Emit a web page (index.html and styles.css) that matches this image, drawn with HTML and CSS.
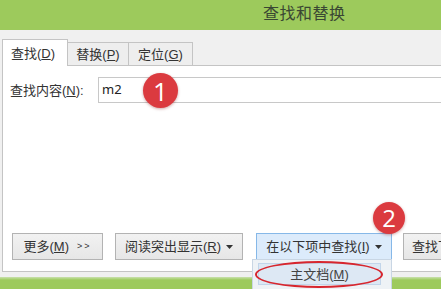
FILE: index.html
```html
<!DOCTYPE html>
<html lang="zh-CN">
<head>
<meta charset="utf-8">
<link rel="stylesheet" href="styles.css">
</head>
<body>
<div class="window">
  <div class="titlebar"><span class="title">查找和替换</span></div>
  <div class="tabstrip">
    <div class="tab active"><span>查找(<u>D</u>)</span></div>
    <div class="tab"><span>替换(<u>P</u>)</span></div>
    <div class="tab"><span>定位(<u>G</u>)</span></div>
  </div>
  <div class="panel">
    <div class="findrow">
      <label class="label">查找内容(<u>N</u>):</label>
      <div class="input">m2</div>
    </div>
    <div class="buttons">
      <div class="btn btn-more"><span>更多(<u>M</u>)</span><span class="arrows">&gt;&gt;</span></div>
      <div class="btn btn-read"><span>阅读突出显示(<u>R</u>)</span><svg class="caret" width="7" height="4" viewBox="0 0 7 4"><path d="M0 0H7L3.5 4Z" fill="#333"/></svg></div>
      <div class="btn btn-in hot"><span>在以下项中查找(<u>I</u>)</span><svg class="caret" width="7" height="4" viewBox="0 0 7 4"><path d="M0 0H7L3.5 4Z" fill="#333"/></svg></div>
      <div class="btn btn-next"><span>查找下一处(<u>F</u>)</span></div>
    </div>
  </div>
  <div class="footer"></div>

  <div class="dropdown">
    <div class="item"><span>主文档(<u>M</u>)</span></div>
  </div>
  <div class="ring"></div>
  <div class="badge badge1">1</div>
  <div class="badge badge2">2</div>
</div>
</body>
</html>
```
FILE: styles.css
```css
* { box-sizing: border-box; }
html, body { margin: 0; padding: 0; }
body {
  width: 441px;
  height: 289px;
  overflow: hidden;
  background: #f0f0f0;
  font-family: "Liberation Sans", "Noto Sans CJK SC", sans-serif;
  font-size: 13px;
  color: #333;
}
u { text-decoration: underline; text-underline-offset: 1px; }
.window { position: relative; width: 441px; height: 289px; overflow: hidden; }
.titlebar {
  height: 30px;
  background: #9dca5c;
  display: flex;
  align-items: center;
  padding-left: 263px;
}
.title { font-size: 16px; color: #3a4733; letter-spacing: 0.5px; line-height: 1; margin-top: -3px; }
.tabstrip {
  height: 35px;
  display: flex;
  align-items: flex-end;
  padding-left: 2px;
}
.tab {
  flex-shrink: 0;
  height: 23px;
  width: 61px;
  background: #eeeeee;
  border: 1px solid #c4c4c4;
  border-bottom: none;
  border-left: none;
  display: flex;
  align-items: center;
  justify-content: center;
  line-height: 1;
  padding-top: 1px;
}
.tab:nth-child(3) { width: 64px; }
.tab.active {
  width: 66px;
  height: 27px;
  background: #fff;
  border-left: 1px solid #c4c4c4;
  margin-bottom: -1px;
  position: relative;
  z-index: 1;
  justify-content: flex-start;
  padding-left: 8px;
  padding-top: 0;
}
.panel {
  margin-left: 2px;
  width: 460px;
  height: 207px;
  background: #fff;
  border: 1px solid #c4c4c4;
  display: flex;
  flex-direction: column;
  padding: 11px 0 11px 7px;
}
.findrow { display: flex; align-items: center; }
.label { width: 88px; flex-shrink: 0; line-height: 1; margin-top: 1px; }
.input {
  height: 26px;
  flex: 1;
  border: 1px solid #c8c8c8;
  border-right: none;
  display: flex;
  align-items: center;
  padding-left: 3px;
  color: #222;
  font-family: "Noto Sans", sans-serif;
  font-size: 13px;
  padding-bottom: 2px;
}
.buttons { margin-top: auto; display: flex; padding-left: 2px; }
.btn {
  flex-shrink: 0;
  height: 27px;
  border: 1px solid #b3b3b3;
  background: linear-gradient(#f2f2f2, #e6e6e6);
  display: flex;
  align-items: center;
  justify-content: center;
  line-height: 1;
  color: #333;
  white-space: nowrap;
}
.btn-more { width: 91px; margin-right: 12px; }
.arrows { font-size: 9px; letter-spacing: 2px; margin-left: 8px; }
.btn-read { width: 128px; margin-right: 13px; }
.btn-in { width: 136px; margin-right: 11px; }
.btn.hot { background: #dcebfb; border-color: #86b8e8; }
.btn-next { width: 110px; justify-content: flex-start; padding-left: 8px; }
.caret { margin-left: 5px; }
.footer {
  height: 17px;
  background: linear-gradient(#f0f0f0 0, #f0f0f0 5px, #c9e1ad 5px, #9dca5c 8px);
}
.dropdown {
  position: absolute;
  left: 252px;
  top: 259px;
  width: 140px;
  height: 32px;
  background: #eef2f6;
  border: 1px solid #c9d6e4;
  padding: 3px 10px 4px 5px;
}
.item {
  height: 22px;
  background: #dde8f4;
  border: 1px solid #c2d5ea;
  display: flex;
  align-items: center;
  justify-content: center;
  line-height: 1;
  color: #444;
}
.ring {
  position: absolute;
  left: 255px;
  top: 261px;
  width: 128px;
  height: 27px;
  border: 2px solid #d7262e;
  border-radius: 50%;
}
.badge {
  position: absolute;
  border-radius: 50%;
  background: #db3a3f;
  color: #fff;
  display: flex;
  align-items: center;
  justify-content: center;
  font-family: "Open Sans", "Liberation Sans", sans-serif;
  line-height: 1;
  box-shadow: 0 1px 3px rgba(120, 0, 0, 0.35);
}
.badge1 { left: 143px; top: 73px; width: 35px; height: 35px; font-size: 26px; }
.badge2 { left: 373px; top: 202px; width: 32px; height: 32px; font-size: 24px; }
```
